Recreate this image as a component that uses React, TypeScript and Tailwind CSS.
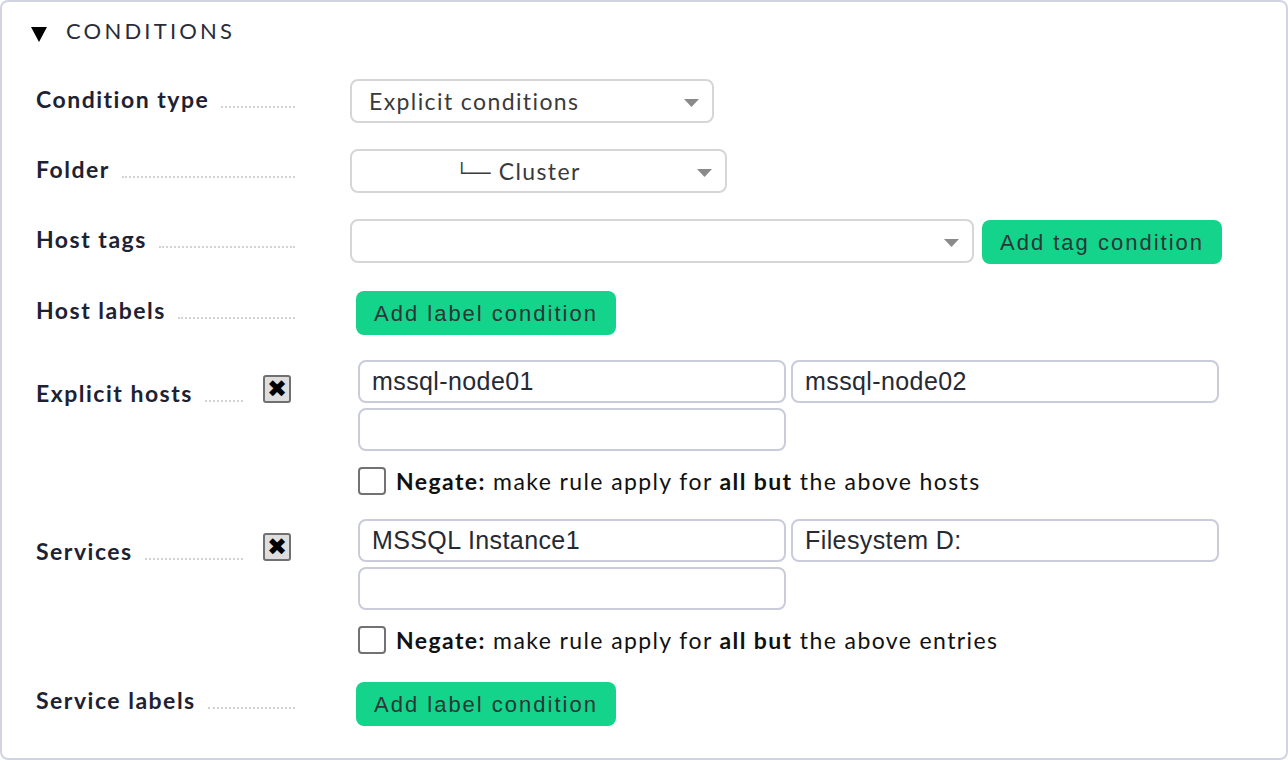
import React from "react";

const LATO = "font-['Lato','Noto_Sans',sans-serif]";
const ARIAL = "font-['Liberation_Sans',Arial,sans-serif]";

function Label({ text, xbox = false }: { text: string; xbox?: boolean }) {
  return (
    <div className="flex items-start w-[259px] shrink-0">
      <div className={`flex items-end ${xbox ? "w-[207px]" : "w-[259px]"}`}>
        <span className={`${LATO} font-bold text-[23px] leading-[24px] tracking-[1.5px] text-[#1d2233] whitespace-nowrap`}>
          {text}
        </span>
        <span className="flex-1 ml-[12px] mb-[3px] border-b-2 border-dotted border-[#d2d2d2]" />
      </div>
      {xbox && (
        <div className="ml-[20px] -mt-[6px] w-[28px] h-[28px] rounded-[3px] border-2 border-[#707070] bg-[#dedede] flex items-center justify-center">
          <span className="font-['DejaVu_Sans',sans-serif] text-[24px] leading-none text-black font-bold">✖</span>
        </div>
      )}
    </div>
  );
}

function Select({ w, children, textPad = "pl-[17px]" }: { w: string; children?: React.ReactNode; textPad?: string }) {
  return (
    <div className={`${w} h-[44px] rounded-[8px] border-2 border-[#d6d6d6] bg-white flex items-center relative`}>
      <span className={`${LATO} ${textPad} text-[23px] tracking-[1.4px] text-[#3a3a3a] whitespace-nowrap`}>{children}</span>
      <svg className="absolute right-[13px] top-[18px]" width="15" height="9" viewBox="0 0 15 9">
        <polygon points="0,0 15,0 7.5,8" fill="#8a8a8a" />
      </svg>
    </div>
  );
}

function Button({ children }: { children: React.ReactNode }) {
  return (
    <div className={`${ARIAL} h-[44px] px-[18px] rounded-[8px] bg-[#14d38a] flex items-center text-[22px] tracking-[2px] text-[#2b3636] whitespace-nowrap`}>
      {children}
    </div>
  );
}

function Input({ value }: { value?: string }) {
  return (
    <div className={`${ARIAL} w-[428px] h-[43px] rounded-[8px] border-2 border-[#cacbdb] bg-white flex items-center pl-[12px] text-[25px] tracking-[0.4px] text-[#262a33]`}>
      {value}
    </div>
  );
}

function Negate({ what }: { what: string }) {
  return (
    <div className="flex items-center mt-[16px] h-[28px]">
      <div className="w-[28px] h-[28px] rounded-[4px] border-2 border-[#727272] bg-white" />
      <span className={`${LATO} ml-[10px] text-[23px] leading-[28px] tracking-[1.4px] text-[#111] whitespace-nowrap`}>
        <b>Negate:</b> make rule apply for <b>all but</b> the above {what}
      </span>
    </div>
  );
}

export default function App() {
  return (
    <div className="w-[1288px] h-[760px] bg-white">
      <div className="w-[1288px] h-[760px] border-2 border-[#d3d4e2] rounded-[8px] bg-white">
        {/* heading */}
        <div className="flex items-center pt-[17px] pl-[29px]">
          <svg width="16" height="15" viewBox="0 0 16 15" className="mt-[7px]">
            <polygon points="0,0 16,0 8,15" fill="#000" />
          </svg>
          <span className={`${LATO} ml-[19px] text-[22px] leading-[24px] tracking-[3.2px] text-[#2a2c38]`}>CONDITIONS</span>
        </div>

        <div className="pl-[34px] mt-[36px] flex flex-col">
          {/* Condition type */}
          <div className="flex items-start">
            <div className="pt-[8px]"><Label text="Condition type" /></div>
            <div className="ml-[55px]"><Select w="w-[364px]">Explicit conditions</Select></div>
          </div>
          {/* Folder */}
          <div className="flex items-start mt-[26px]">
            <div className="pt-[8px]"><Label text="Folder" /></div>
            <div className="ml-[55px]">
              <Select w="w-[377px]" textPad="pl-[104px]">
                <span className="font-['DejaVu_Sans',sans-serif] text-[19px] tracking-[0px]">└──</span>{" "}<span className="ml-[1px]">Cluster</span>
              </Select>
            </div>
          </div>
          {/* Host tags */}
          <div className="flex items-start mt-[26px]">
            <div className="pt-[8px]"><Label text="Host tags" /></div>
            <div className="ml-[55px] flex items-start gap-[8px]">
              <Select w="w-[624px]" />
              <div className="mt-[1px]"><Button>Add tag condition</Button></div>
            </div>
          </div>
          {/* Host labels */}
          <div className="flex items-start mt-[26px]">
            <div className="pt-[8px]"><Label text="Host labels" /></div>
            <div className="ml-[61px] mt-[1px]"><Button>Add label condition</Button></div>
          </div>
          {/* Explicit hosts */}
          <div className="flex items-start mt-[25px]">
            <div className="pt-[21px]"><Label text="Explicit hosts" xbox /></div>
            <div className="ml-[63px] flex flex-col">
              <div className="flex gap-[5px]">
                <Input value="mssql-node01" />
                <Input value="mssql-node02" />
              </div>
              <div className="mt-[5px]"><Input /></div>
              <Negate what="hosts" />
            </div>
          </div>
          {/* Services */}
          <div className="flex items-start mt-[24px]">
            <div className="pt-[20px]"><Label text="Services" xbox /></div>
            <div className="ml-[63px] flex flex-col">
              <div className="flex gap-[5px]">
                <Input value="MSSQL Instance1" />
                <Input value="Filesystem D:" />
              </div>
              <div className="mt-[5px]"><Input /></div>
              <Negate what="entries" />
            </div>
          </div>
          {/* Service labels */}
          <div className="flex items-start mt-[27px]">
            <div className="pt-[7px]"><Label text="Service labels" /></div>
            <div className="ml-[61px] mt-[1px]"><Button>Add label condition</Button></div>
          </div>
        </div>
      </div>
    </div>
  );
}
